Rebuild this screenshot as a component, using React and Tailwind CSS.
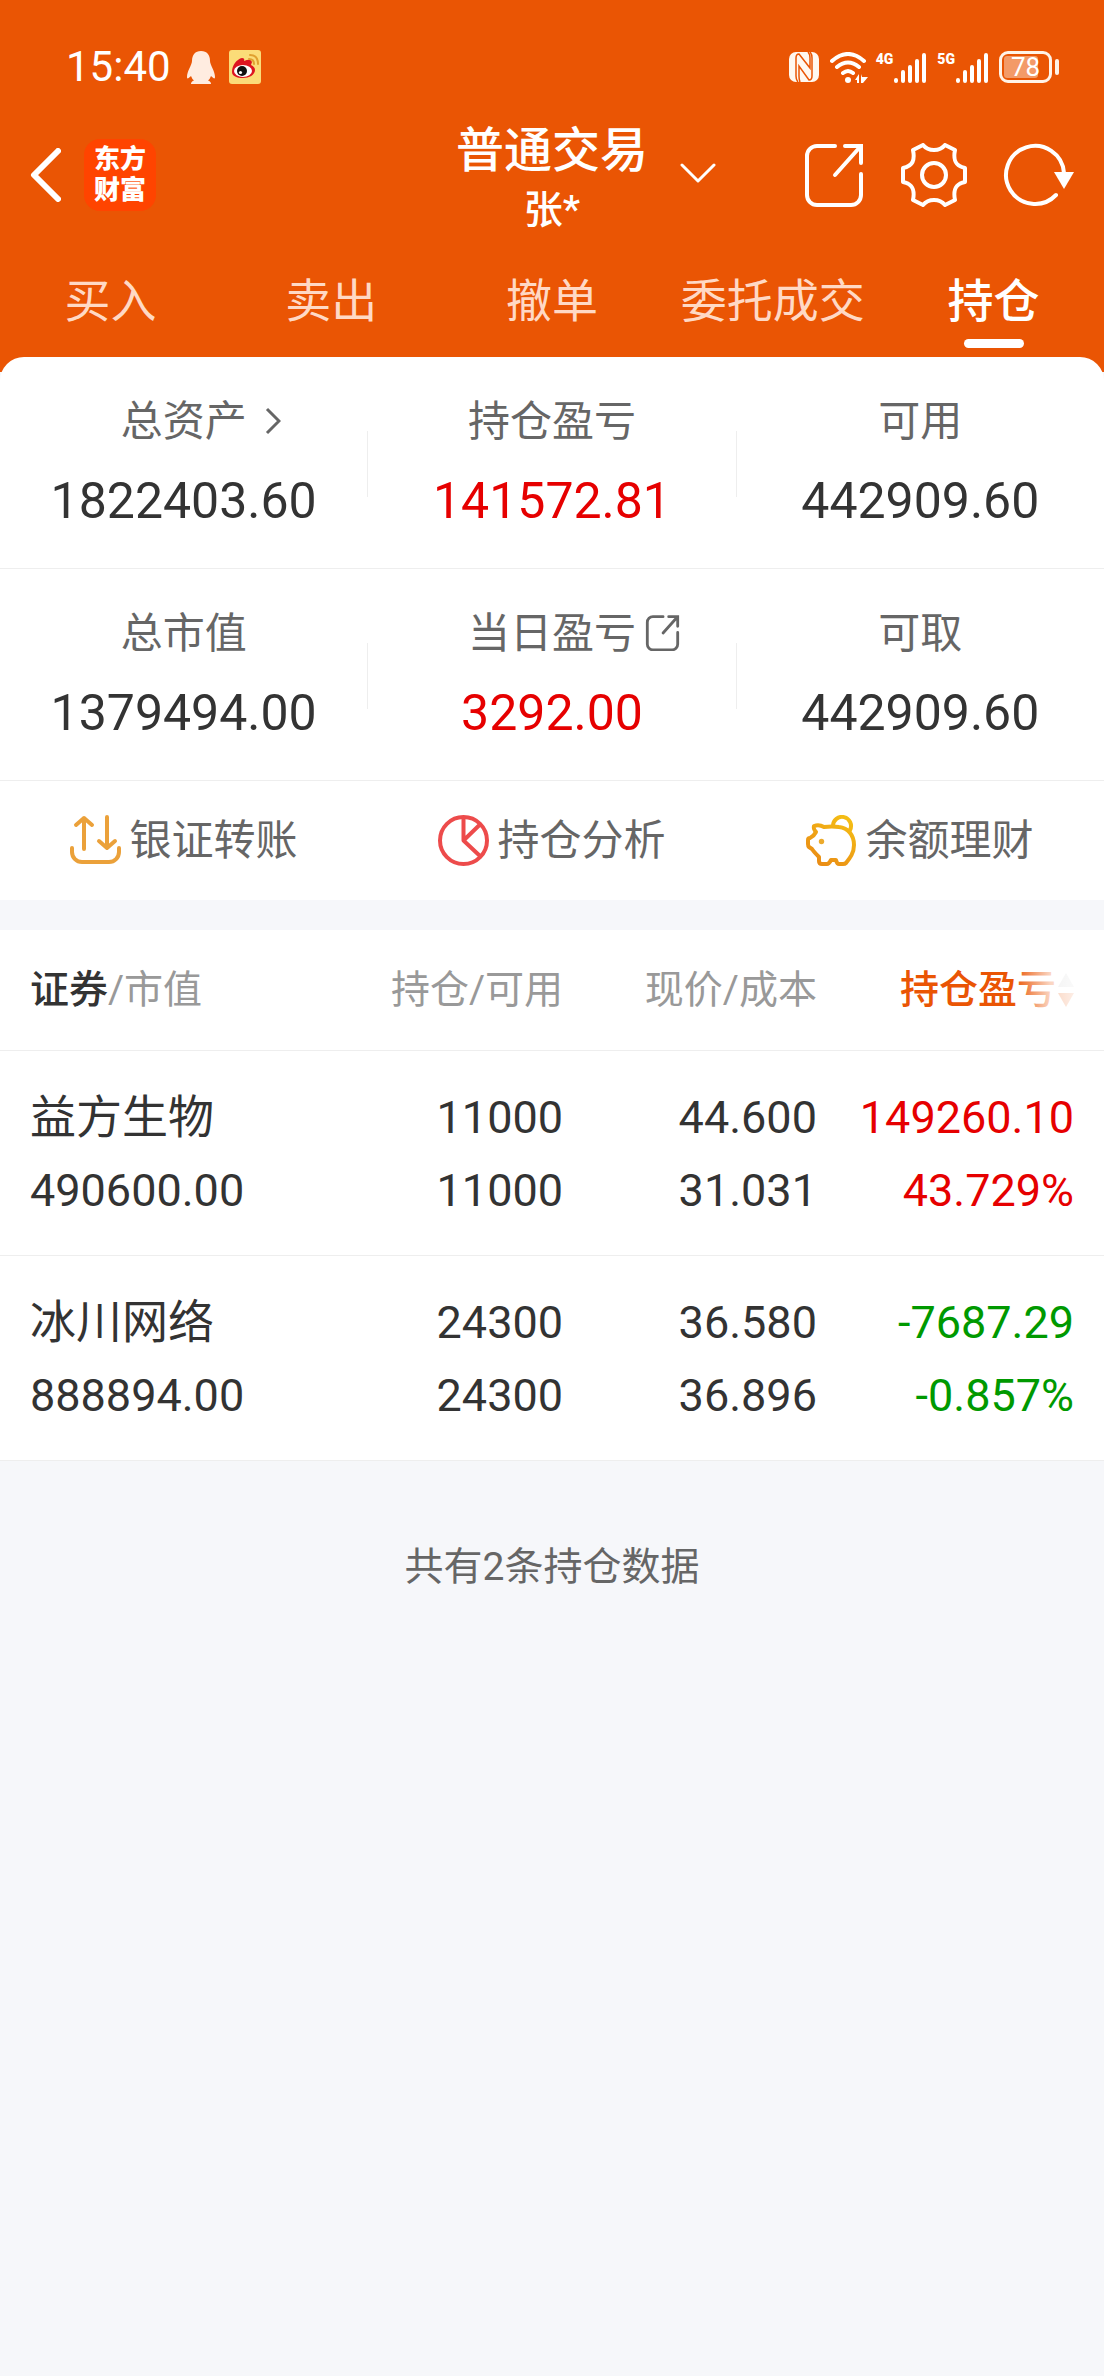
const summary = [
    [
        { label: '总资产', value: '1822403.60', icon: 'chevron' },
        { label: '持仓盈亏', value: '141572.81', color: 'text-[#e60000]' },
        { label: '可用', value: '442909.60' }
    ],
    [
        { label: '总市值', value: '1379494.00' },
        { label: '当日盈亏', value: '3292.00', color: 'text-[#e60000]', icon: 'share' },
        { label: '可取', value: '442909.60' }
    ]
];

const tabs = ['买入', '卖出', '撤单', '委托成交', '持仓'];

const positions = [
    { name: '益方生物', market: '490600.00', held: '11000', usable: '11000', price: '44.600', cost: '31.031', profit: '149260.10', rate: '43.729%', color: 'text-[#e60000]' },
    { name: '冰川网络', market: '888894.00', held: '24300', usable: '24300', price: '36.580', cost: '36.896', profit: '-7687.29', rate: '-0.857%', color: 'text-[#009900]' }
];

const ShareIcon = ({ className, strokeWidth = 4 }) => (
    <svg className={className} viewBox="0 0 58 64" fill="none" stroke="currentColor" strokeWidth={strokeWidth} strokeLinecap="round" strokeLinejoin="round" aria-hidden="true">
        <path d="M30 3H12a10 10 0 0 0-10 10v39a10 10 0 0 0 10 10h34a10 10 0 0 0 10-10V31" />
        <path d="M30 32 55 4M40 3h16v17" strokeLinejoin="miter" />
    </svg>
);

const GearIcon = () => (
    <svg className="w-[66px] h-16" viewBox="0 0 66 64" fill="none" stroke="currentColor" strokeWidth="4" strokeLinejoin="round" aria-hidden="true">
        <path d="M22 2Q26 7 33 7T44 2L54 7C52 17 54 23 64 25V39C54 41 52 47 54 57L44 62Q40 57 33 57T22 62L12 57C14 47 12 41 2 39V25C12 23 14 17 12 7Z" />
        <circle cx="33" cy="32" r="12" />
    </svg>
);

const RefreshIcon = () => (
    <svg className="w-[71px] h-16" viewBox="0 0 71 64" fill="none" aria-hidden="true">
        <path d="M53 52A29 29 0 1 1 61 30" stroke="currentColor" strokeWidth="4" strokeLinecap="round" />
        <path d="M51 29h20L61 46Z" fill="currentColor" />
    </svg>
);

const TransferIcon = () => (
    <svg className="size-[51px]" viewBox="0 0 51 51" fill="none" stroke="#eba13a" strokeWidth="4" strokeLinecap="round" strokeLinejoin="round" aria-hidden="true">
        <path d="M2 33v4a10 10 0 0 0 10 10h27a10 10 0 0 0 10-10v-4" />
        <path d="M14 34V3M6 10l8-7 8 7M37 2v31M29 26l8 7 8-7" />
    </svg>
);

const PieIcon = () => (
    <svg className="size-[51px]" viewBox="0 0 51 51" fill="none" stroke="#ed4b4b" strokeWidth="4" aria-hidden="true">
        <circle cx="25.5" cy="25.5" r="23.5" />
        <path d="M25.500 2v23.500L42 9.500M25.500 25.500 42 41" strokeLinejoin="round" />
    </svg>
);

const PiggyIcon = () => (
    <svg className="size-[51px]" viewBox="0 0 51 51" fill="none" stroke="url(#piggy)" strokeWidth="4" strokeLinejoin="round" strokeLinecap="round" aria-hidden="true">
        <defs>
            <linearGradient id="piggy" x1="10" y1="50" x2="42" y2="0" gradientUnits="userSpaceOnUse">
                <stop offset="0" stopColor="#e98a15" />
                <stop offset="1" stopColor="#f5c015" />
            </linearGradient>
        </defs>
        <path d="M8 11Q13 9 18 12Q26 11 33 12C42 13 48 20 48 30C48 38 44 43 40 48Q39 49 37 49H33Q31 49 30 45H25Q23 49 21 49H16Q13 49 13 46V42C10 39 8 37 6 34L3 32Q2 31 2 29V25Q2 23 4 23Q8 21 10 17Q7 14 8 11Z" />
        <path d="M27 11A9 9 0 1 1 44 15" />
        <circle cx="15.500" cy="26.500" r="2.700" fill="#ecaa2c" stroke="none" />
    </svg>
);

const Signal = ({ label }) => (
    <span className="flex items-start">
        <span className="text-[14px] leading-[14px] font-black">{label}</span>
        <svg className="w-[34px] h-[31px]" viewBox="0 0 34 31" stroke="currentColor" strokeWidth="4" strokeLinecap="round" aria-hidden="true">
            <path d="M3 29v-1M10 29v-9M17 29V15M24 29V9M31 29V3" />
        </svg>
    </span>
);

const StatusBar = () => (
    <div className="flex items-center justify-between h-[54px] pl-[66px] pr-[45px]">
        <div className="flex items-center">
            <span className="text-[42px] leading-[54px]">15:40</span>
            <svg className="w-7 h-[33px] ml-4" viewBox="0 0 28 33" fill="#ffece0" aria-hidden="true">
                <path d="M14 0C8 0 5 4 5 10C5 14 0 20 0 26C0 28 1 28 4 25Q5 28 7 29.500Q4 30.500 4 33H24Q24 30.500 21 29.500Q23 28 24 25C27 28 28 28 28 26C28 20 23 14 23 10C23 4 20 0 14 0Z" />
            </svg>
            <svg className="w-8 h-[34px] ml-[14px]" viewBox="0 0 32 34" fill="none" aria-hidden="true">
                <rect width="32" height="34" rx="3" fill="#fbdc78" />
                <path d="M3 22C3 15 8 9 13 8Q16 8 15 11Q22 8 23 12L22 15Q26 17 26 20C26 25 20 28 14 28S3 26 3 22Z" fill="#dd1420" />
                <ellipse cx="14" cy="21" rx="9" ry="6" fill="#fff" />
                <circle cx="13" cy="21" r="5" fill="#111" />
                <circle cx="11.500" cy="22.500" r="1.600" fill="#fff" />
                <path d="M21 5Q29 5 29 14M20 9Q25 9 25 14" stroke="#e0a030" strokeWidth="2" strokeLinecap="round" />
            </svg>
        </div>
        <div className="flex items-center">
            <svg className="size-[30px]" viewBox="0 0 30 30" aria-hidden="true">
                <rect width="30" height="30" rx="7" fill="#fff8f0" />
                <path d="M9 30Q7 28 7 24V6Q7 2 10 2L21 16V6Q21 2 19 0M21 0Q23 2 23 6V24Q23 28 20 28L10 14V24Q10 28 11 30" fill="none" stroke="#ea5504" strokeWidth="1.500" />
            </svg>
            <svg className="w-[38px] h-[31px] ml-[11px]" viewBox="0 0 38 31" fill="none" stroke="currentColor" strokeWidth="4" strokeLinecap="round" aria-hidden="true">
                <path d="M2 9Q18-5 34 9M7 15Q18 6 29 15M13 21Q18 17 23 21" />
                <circle cx="18" cy="28" r="3" fill="currentColor" stroke="none" />
                <path d="M25 28 29 22V31H27V28ZM31 31v-9l1 3h6l-5 6Z" fill="currentColor" stroke="none" />
            </svg>
            <span className="flex gap-[10px] ml-2">
                <Signal label="4G" />
                <Signal label="5G" />
            </span>
            <span className="flex items-center gap-[3px] ml-[10px]">
                <span className="relative flex items-center justify-center w-[53px] h-8 border-3 border-[#fff3e8] rounded-[9px] text-[26px] leading-[26px]">
                    <span className="absolute left-[2px] inset-y-[2px] w-[34px] bg-[#f39a68] rounded-[3px]"></span>
                    <span className="relative">78</span>
                </span>
                <span className="w-1 h-4 bg-[#fff3e8] rounded-full"></span>
            </span>
        </div>
    </div>
);

const Header = () => (
    <header className="bg-[#ea5504] text-white pt-10 pb-6">
        <StatusBar />
        <div className="grid grid-cols-[1fr_auto_1fr] items-start px-[30px] mt-[25px]">
            <div className="flex items-center h-28">
                <button type="button" aria-label="返回">
                    <svg className="w-[31px] h-[54px]" viewBox="0 0 31 54" fill="none" stroke="currentColor" strokeWidth="6" strokeLinecap="round" strokeLinejoin="round" aria-hidden="true">
                        <path d="M28 3 4 27 28 51" />
                    </svg>
                </button>
                <div className="flex flex-col items-center justify-center size-[72px] ml-[23px] rounded-2xl bg-[#ff4400] text-[26px] leading-[31px] font-black">
                    <span>东方</span>
                    <span>财富</span>
                </div>
            </div>
            <button type="button" className="relative text-center">
                <span className="block text-[48px] leading-[64px] font-medium">普通交易</span>
                <span className="block text-[39px] leading-[54px] font-medium">张*</span>
                <svg className="absolute left-full top-[44px] ml-8 w-9 h-5" viewBox="0 0 36 20" fill="none" stroke="currentColor" strokeWidth="3" strokeLinecap="round" strokeLinejoin="round" aria-hidden="true">
                    <path d="M2 2 18 18 34 2" />
                </svg>
            </button>
            <div className="flex items-center justify-end h-28">
                <button type="button" aria-label="分享"><ShareIcon className="w-[58px] h-16" /></button>
                <button type="button" aria-label="设置" className="ml-[38px]"><GearIcon /></button>
                <button type="button" aria-label="刷新" className="ml-9"><RefreshIcon /></button>
            </div>
        </div>
        <nav className="grid grid-cols-5 pt-8">
            {tabs.map((tab) => (
                <a
                    key={tab}
                    href="#"
                    className={`flex flex-col items-center gap-[6px] text-[46px] leading-[64px] ${tab === '持仓' ? 'text-white font-medium' : 'text-[#ffd9c5]'}`}
                >
                    {tab}
                    <span className={`w-[60px] h-[9px] rounded-full ${tab === '持仓' ? 'bg-white' : ''}`}></span>
                </a>
            ))}
        </nav>
    </header>
);

const SummaryCell = ({ item }) => (
    <div className="flex-1 flex flex-col items-center">
        <div className="relative text-[42px] leading-[50px] text-[#666666]">
            {item.label}
            {item.icon === 'chevron' && (
                <svg className="absolute left-full top-[10px] ml-[18px] w-4 h-7" viewBox="0 0 16 28" fill="none" stroke="currentColor" strokeWidth="3" aria-hidden="true">
                    <path d="M2 2 14 14 2 26" />
                </svg>
            )}
            {item.icon === 'share' && <ShareIcon className="absolute left-full top-[6px] ml-[9px] w-[35px] h-9" strokeWidth={5} />}
        </div>
        <div className={`mt-6 text-[50px] leading-[60px] ${item.color || 'text-[#333333]'}`}>{item.value}</div>
    </div>
);

const actions = [
    { label: '银证转账', icon: <TransferIcon /> },
    { label: '持仓分析', icon: <PieIcon /> },
    { label: '余额理财', icon: <PiggyIcon /> }
];

const Holdings = () => (
    <table className="w-full table-fixed bg-white text-right text-[#333333]">
        <thead>
            <tr className="border-b border-[#eeeeee] text-[39px] leading-[60px] text-[#999999]">
                <th className="w-[31%] py-[30px] pl-[30px] text-left font-normal"><span className="text-[#333333] font-medium">证券</span>/市值</th>
                <th className="w-[20%] py-[30px] font-normal">持仓/可用</th>
                <th className="w-[23%] py-[30px] font-normal">现价/成本</th>
                <th className="py-[30px] pr-[30px] font-medium text-[#ea5504]">
                    <button type="button" className="relative inline-flex items-center gap-[2px] align-top">
                        持仓盈亏
                        <svg className="w-4 h-9" viewBox="0 0 16 36" aria-hidden="true">
                            <path d="M8 1 16 15H0Z" fill="#cccccc" />
                            <path d="M8 35 16 21H0Z" fill="#ea5504" />
                        </svg>
                        <span className="absolute right-0 inset-y-0 w-[60px] bg-linear-to-r from-white/0 via-white/75 via-60% to-white/90"></span>
                    </button>
                </th>
            </tr>
        </thead>
        <tbody>
            {positions.map((p) => (
                <tr key={p.name} className="border-b border-[#eeeeee] text-[45px] leading-[73px]">
                    <td className="pt-[30px] pb-7 pl-[30px] text-left">
                        <div className="text-[46px]">{p.name}</div>
                        <div>{p.market}</div>
                    </td>
                    <td className="pt-[30px] pb-7">
                        <div>{p.held}</div>
                        <div>{p.usable}</div>
                    </td>
                    <td className="pt-[30px] pb-7">
                        <div>{p.price}</div>
                        <div>{p.cost}</div>
                    </td>
                    <td className={`pt-[30px] pb-7 pr-[30px] ${p.color}`}>
                        <div>{p.profit}</div>
                        <div>{p.rate}</div>
                    </td>
                </tr>
            ))}
        </tbody>
    </table>
);

const App = () => {
    return (
        <div className="min-h-screen bg-[#f6f7fa] font-['Roboto','Noto_Sans_CJK_SC',sans-serif]" lang="zh-CN">
            <Header />
            <main>
                <section className="relative -mt-[15px] bg-white rounded-t-3xl">
                    {summary.map((row) => (
                        <div key={row[0].label} className="flex items-center pt-10 pb-[37px] border-b border-[#eeeeee]">
                            <SummaryCell item={row[0]} />
                            <div className="w-px h-[66px] bg-[#eeeeee]"></div>
                            <SummaryCell item={row[1]} />
                            <div className="w-px h-[66px] bg-[#eeeeee]"></div>
                            <SummaryCell item={row[2]} />
                        </div>
                    ))}
                    <div className="grid grid-cols-3 h-[119px]">
                        {actions.map((action) => (
                            <button key={action.label} type="button" className="flex items-center justify-center gap-2 text-[42px] leading-[50px] text-[#666666]">
                                {action.icon}
                                {action.label}
                            </button>
                        ))}
                    </div>
                </section>
                <section className="mt-[30px]">
                    <Holdings />
                    <p className="pt-[76px] text-center text-[39px] leading-[60px] text-[#666666]">共有2条持仓数据</p>
                </section>
            </main>
        </div>
    );
};

export default App;
